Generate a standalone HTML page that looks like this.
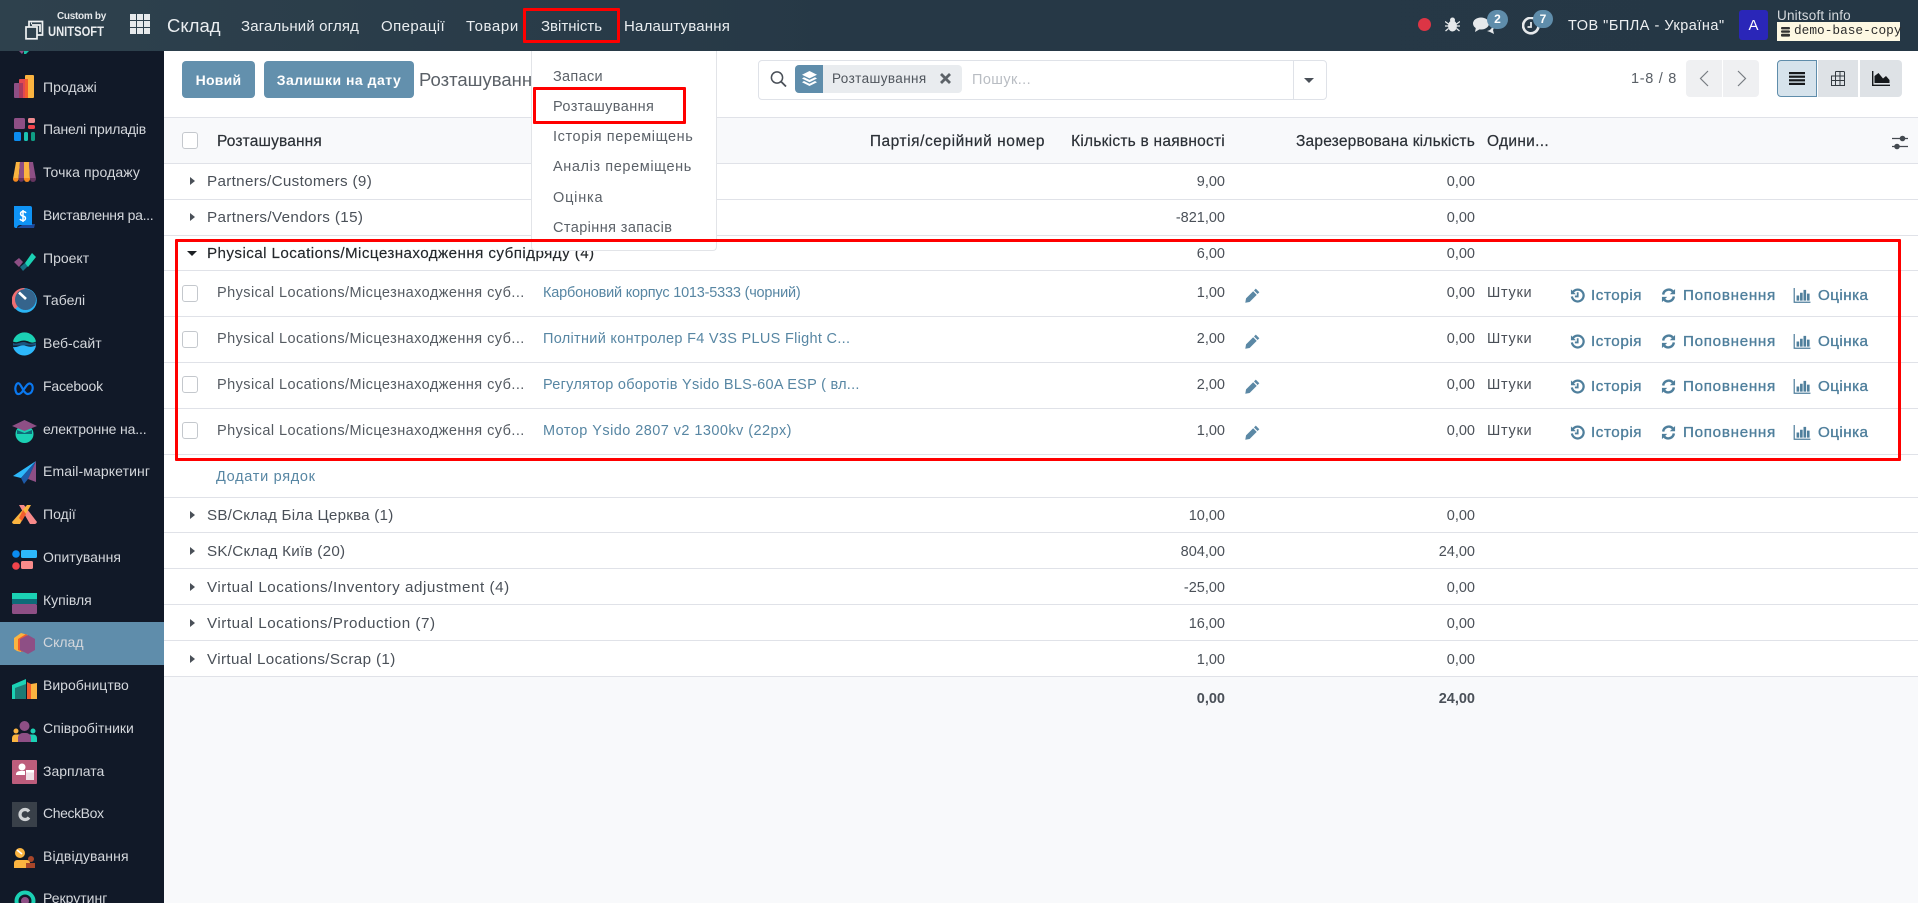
<!DOCTYPE html>
<html lang="uk"><head><meta charset="utf-8"><title>Склад</title>
<style>
html,body{margin:0;padding:0;width:1918px;height:903px;overflow:hidden;background:#fff}
body{position:relative;font-family:"Liberation Sans","Noto Sans CJK SC",sans-serif;font-size:14.5px;color:#4a5058}
.a,.t,.l,svg{position:absolute}
.t{line-height:20px;white-space:nowrap}
.l{left:164px;right:0;height:1px;background:#e0e2e8}
.nav{color:#e9edf0;font-size:15px}
.side{left:43px;color:#d4d7dc;font-size:14px}
.g{left:207px;color:#4a5058;font-size:15.2px}
.h{color:#2b3036;-webkit-text-stroke:.2px #2b3036;font-size:15.5px}
.m{left:553px;color:#5b6168}
.n{left:217px;color:#555b62;letter-spacing:.44px}
.p{left:543px;color:#5786a3}
.r1{right:693px}.r2{right:443px}
.u{left:1487px;letter-spacing:.7px}
.act{color:#4f7f9c;font-size:15.2px;-webkit-text-stroke:.35px #4f7f9c}
.a1{left:1591px;letter-spacing:.57px}.a2{left:1683px;letter-spacing:.7px}.a3{left:1818px;letter-spacing:.45px}
.cb{left:182px;width:14px;height:15px;border:1px solid #c4c8cd;border-radius:3px;background:#fff}
.car{left:190px;width:0;height:0;border-top:4.5px solid transparent;border-bottom:4.5px solid transparent;border-left:5px solid #4a5058}
.red{border:3.5px solid #f00;box-sizing:border-box;border-radius:1px}
</style></head><body>
<svg width="0" height="0" style="position:absolute"><defs>
<symbol id="hist" viewBox="0 0 16 16"><path d="M3 4.500A6.300 6.300 0 1 1 2 9" fill="none" stroke="#4f7f9c" stroke-width="2.400"/><path d="M1 1.500L6.200 6.600H1z" fill="#4f7f9c"/><path d="M8.200 4.500V9H5.200" fill="none" stroke="#4f7f9c" stroke-width="1.900"/></symbol>
<symbol id="ref" viewBox="0 0 16 16"><path d="M2.300 7A6 6 0 0 1 12.600 3.600" fill="none" stroke="#4f7f9c" stroke-width="2.600"/><path d="M15 1v5.600H9.400z" fill="#4f7f9c"/><path d="M13.700 9A6 6 0 0 1 3.400 12.400" fill="none" stroke="#4f7f9c" stroke-width="2.600"/><path d="M1 15V9.400h5.600z" fill="#4f7f9c"/></symbol>
<symbol id="bar" viewBox="0 0 18 16"><path d="M.7 0v15.200H18" fill="none" stroke="#4f7f9c" stroke-width="1.300"/><path d="M3.200 8h2.800v5.500H3.200zM6.900 5h2.800v8.500H6.900zM10.600 2h2.800v11.500h-2.800zM14.300 6h2.800v7.500h-2.800z" fill="#4f7f9c"/></symbol>
<symbol id="pen" viewBox="0 0 16 16"><path d="M11.500.7l3.800 3.800-1.900 1.900-3.800-3.800zM8.700 3.500l3.800 3.800-7.600 7.600L.3 15.700l.8-4.600z" fill="#5b88a5"/></symbol>
</defs></svg>

<!-- navbar -->
<div class="a" style="left:0;top:0;width:1918px;height:51px;background:linear-gradient(90deg,#2e414d,#263846 45%,#253745)"></div>
<svg style="left:25px;top:20px" width="19" height="20" viewBox="0 0 19 20" fill="none" stroke="#f0f2f3" stroke-width="1.700"><path d="M4 7V1.500h13.500V15h-5"/><path d="M7 3.500h-1M7 5h8v7"/><rect x="1" y="7" width="11" height="11.800"/></svg>
<div class="t" style="left:57px;top:7px;font-size:10px;font-weight:700;color:#e5e8ea;letter-spacing:-.3px">Custom by</div>
<div class="t" style="left:48px;top:21px;font-size:14px;font-weight:700;color:#e9ecee;transform:scaleX(.8);transform-origin:0 50%">UNITSOFT</div>
<svg style="left:130px;top:14px" width="20" height="20" viewBox="0 0 20 20" fill="#e6e9eb"><rect width="6" height="6"/><rect x="7" width="6" height="6"/><rect x="14" width="6" height="6"/><rect y="7" width="6" height="6"/><rect x="7" y="7" width="6" height="6"/><rect x="14" y="7" width="6" height="6"/><rect y="14" width="6" height="6"/><rect x="7" y="14" width="6" height="6"/><rect x="14" y="14" width="6" height="6"/></svg>
<div class="t" style="left:167px;top:16px;font-size:18.500px;color:#e9edf0">Склад</div>
<div class="t nav" style="left:241px;top:17px;letter-spacing:.15px">Загальний огляд</div>
<div class="t nav" style="left:381px;top:17px;letter-spacing:.4px">Операції</div>
<div class="t nav" style="left:466px;top:17px;letter-spacing:.6px">Товари</div>
<div class="t nav" style="left:541px;top:17px">Звітність</div>
<div class="t nav" style="left:624px;top:17px;letter-spacing:.2px">Налаштування</div>

<svg style="left:1418px;top:18px" width="13" height="13"><circle cx="6.500" cy="6.500" r="6.500" fill="#dc3545"/></svg>
<svg style="left:1445px;top:17px" width="15" height="15" viewBox="0 0 15 15" fill="#e6e9eb"><ellipse cx="7.500" cy="9" rx="4.500" ry="5.500"/><circle cx="7.500" cy="3" r="2.500"/><path d="M0 4.500l3.500 2.500M15 4.500l-3.500 2.500M0 9h3M12 9h3M.5 14l3-2.500M14.500 14l-3-2.500" stroke="#e6e9eb" stroke-width="1.300"/></svg>
<svg style="left:1473px;top:16px" width="22" height="19" viewBox="0 0 22 19" fill="#e6e9eb"><ellipse cx="8" cy="7.500" rx="8" ry="6"/><path d="M3 11l-1 5 5-3z"/><path d="M14 15a7 5 0 0 0 5-6l2 3-1 2 1 4-4-2z"/></svg>
<div class="a" style="left:1487px;top:10px;width:21px;height:19px;border-radius:10px;background:#5f8dab"></div>
<div class="t" style="left:1487px;top:9px;width:21px;text-align:center;color:#fff;font-size:12px;font-weight:700">2</div>
<svg style="left:1522px;top:17px" width="18" height="18" viewBox="0 0 18 18" fill="none" stroke="#e6e9eb" stroke-width="2.600"><path d="M15 4A7.700 7.700 0 1 0 16.500 9"/><path d="M9 5v5H5.500" stroke-width="1.800"/></svg>
<div class="a" style="left:1533px;top:10px;width:20px;height:18px;border-radius:10px;background:#5f8dab"></div>
<div class="t" style="left:1533px;top:9px;width:20px;text-align:center;color:#fff;font-size:12px;font-weight:700">7</div>
<div class="t" style="left:1568px;top:16px;color:#eef0f2;font-size:14.500px;letter-spacing:.5px">ТОВ "БПЛА - Україна"</div>
<div class="a" style="left:1739px;top:10px;width:29px;height:30px;border-radius:3px;background:#2a26b8"></div>
<div class="t" style="left:1739px;top:16px;width:29px;text-align:center;color:#fff;font-size:15px">А</div>
<div class="t" style="left:1777px;top:6px;color:#d6dade;font-size:13.500px;letter-spacing:.2px">Unitsoft info</div>
<div class="a" style="left:1777px;top:22px;width:123px;height:19px;background:#fdf8e3"></div>
<svg style="left:1781px;top:27px" width="9" height="10" viewBox="0 0 9 10" fill="#333"><rect width="9" height="2.400" rx="1"/><rect y="3.400" width="9" height="2.400" rx="1"/><rect y="6.800" width="9" height="2.800" rx="1"/></svg>
<div class="t" style="left:1794px;top:21px;font-family:'Liberation Mono',monospace;font-size:12.800px;color:#2c2c2c">demo-base-copy</div>

<!-- sidebar -->
<div class="a" style="left:0;top:51px;width:164px;height:852px;background:#111928"></div>
<div class="a" style="left:0;top:622px;width:164px;height:43px;background:#5f8dab"></div>
<svg style="left:18px;top:51px" width="12" height="4"><path d="M1 0h5l-2 3z" fill="#8e4f85"/><path d="M6 0h5l-3 3-2 0z" fill="#1bbfa6"/></svg>

<svg style="left:12px;top:74px" width="25" height="25" viewBox="0 0 25 25"><rect x="2" y="9" width="9" height="15" rx="1" fill="#8e4f85"/><rect x="7" y="5" width="9" height="19" rx="1" fill="#e2484f"/><rect x="13" y="1" width="9" height="23" rx="1" fill="#fbb440"/><rect x="13" y="5" width="3" height="19" fill="#f25d2d"/><rect x="7" y="9" width="4" height="15" fill="#a83a5e"/></svg>
<div class="t side" style="top:77px">Продажі</div>
<svg style="left:12px;top:117px" width="25" height="25" viewBox="0 0 25 25"><rect x="2" y="1" width="11" height="11" rx="1.500" fill="#8e4f85"/><rect x="16" y="1" width="7" height="5" rx="1.500" fill="#f08b8f"/><rect x="16" y="8" width="7" height="4" rx="1.500" fill="#f2444c"/><rect x="2" y="15" width="7" height="9" rx="1.500" fill="#0b8cf0"/><rect x="12" y="15" width="4" height="9" rx="1.500" fill="#1bc4b4"/><rect x="19" y="15" width="4" height="9" rx="1.500" fill="#0f9d84"/></svg>
<div class="t side" style="top:119px;letter-spacing:-.2px">Панелі приладів</div>
<svg style="left:12px;top:159px" width="25" height="25" viewBox="0 0 25 25"><path d="M4 3h4l-1.500 17H1z" fill="#fbb440"/><path d="M8 3h4v17H6.500z" fill="#8e4f85"/><path d="M12 3h5l1 17h-6z" fill="#fbb440"/><path d="M17 3h4l3 17h-6z" fill="#8e4f85"/><path d="M1 19h5.500v1a2.700 2.700 0 0 1-5.500 0z" fill="#f58a1f"/><path d="M6.500 19H12v1a2.700 2.700 0 0 1-5.500 0z" fill="#65345f"/><path d="M12 19h6v1a3 3 0 0 1-6 0z" fill="#f58a1f"/><path d="M18 19h6v1a3 3 0 0 1-6 0z" fill="#65345f"/></svg>
<div class="t side" style="top:162px;letter-spacing:.1px">Точка продажу</div>
<svg style="left:12px;top:205px" width="25" height="25" viewBox="0 0 25 25"><path d="M5 23h17l1-4H12z" fill="#1d4a9c"/><path d="M2 1h16a2 2 0 0 1 2 2v17H8a3 3 0 0 0-3 3H4a2 2 0 0 1-2-2z" fill="#0f93f5"/><path d="M11 6.500C8 6.500 7.500 10.300 11 11s3 4.500 0 4.500c-1.500 0-2.500-.6-3-1.500M14 8c-.5-1-1.500-1.500-3-1.500M11 5v12" fill="none" stroke="#fff" stroke-width="1.500"/></svg>
<div class="t side" style="top:205px;letter-spacing:-.3px">Виставлення ра...</div>
<svg style="left:12px;top:248px" width="25" height="25" viewBox="0 0 25 25"><path d="M2 14l5-4 4 4-4 5z" fill="#8e4f85"/><path d="M8 19l5-4 3 3-5 5z" fill="#166f85"/><path d="M13 15L20 5l4 4-8 10z" fill="#1bd1b4"/></svg>
<div class="t side" style="top:248px">Проект</div>
<svg style="left:12px;top:288px" width="25" height="25" viewBox="0 0 25 25"><circle cx="12.500" cy="12.500" r="12.300" fill="#2bb5f5"/><path d="M12.500 0A12.500 12.500 0 0 0 3 21L12.500 12.500z" fill="#ef6f72"/><circle cx="13.500" cy="11.500" r="10.500" fill="#35648c"/><path d="M7 4.500L14 11" stroke="#fff" stroke-width="2.600"/></svg>
<div class="t side" style="top:290px">Табелі</div>
<svg style="left:12px;top:332px" width="25" height="25" viewBox="0 0 25 25"><path d="M1 9.500A11.800 11.800 0 0 1 24 9.500c-5 3-7-1-12-1s-6 3-11 1z" fill="#1bd1b4"/><path d="M1 11c4 2 7-1.500 11-1s4 3 12 .5v3l-23 0z" fill="#19547f"/><path d="M1 15c5 1 8-3 13-1 4 1 6 1 10-.5A11.800 11.800 0 0 1 1 15z" fill="#2db8fb"/></svg>
<div class="t side" style="top:333px">Веб-сайт</div>
<svg style="left:12px;top:375px" width="25" height="25" viewBox="0 0 25 25" fill="none"><path d="M4 17c-2-5 1-10 3-8.500 3 2 5 11 9 10.500 5-.5 6-8 3-10-3-2.500-6 4-9 8-2 2.500-5 3-6 0z" stroke="#0a78f0" stroke-width="2.200"/></svg>
<div class="t side" style="top:376px;letter-spacing:-.2px">Facebook</div>
<svg style="left:12px;top:419px" width="25" height="25" viewBox="0 0 25 25"><circle cx="12.500" cy="15" r="9" fill="#1bd1b4"/><path d="M5 11l7.500 3 7.500-3v4H5z" fill="#0d6b78"/><path d="M0 7l12.500-6L25 7l-12.500 5z" fill="#8e4f85"/></svg>
<div class="t side" style="top:419px;letter-spacing:-.15px">електронне на...</div>
<svg style="left:12px;top:460px" width="25" height="25" viewBox="0 0 25 25"><path d="M24 1L1 16l8 2z" fill="#2db8fb"/><path d="M24 1L9 18l3 6 4-5z" fill="#1d5aa8"/><path d="M24 1l-8 18 8 3z" fill="#8e4f85"/></svg>
<div class="t side" style="top:461px;letter-spacing:.1px">Email-маркетинг</div>
<svg style="left:12px;top:503px" width="25" height="25" viewBox="0 0 25 25"><path d="M7 2h5l13 17a3 3 0 0 1-2 2h-5z" fill="#f88a8a"/><path d="M19 2h-4L0 19c0 1 1 2 2 2h6z" fill="#fbb440"/><path d="M11 7l3 4-4 7-3-3z" fill="#f25d2d"/></svg>
<div class="t side" style="top:504px">Події</div>
<svg style="left:12px;top:548px" width="25" height="25" viewBox="0 0 25 25"><circle cx="4" cy="6" r="3.800" fill="#0b8cf0"/><circle cx="4" cy="18" r="3.800" fill="#f2444c"/><rect x="9" y="2" width="16" height="8" rx="1.500" fill="#2db8fb"/><rect x="9" y="13" width="12" height="8" rx="1.500" fill="#f88a8a"/></svg>
<div class="t side" style="top:547px">Опитування</div>
<svg style="left:12px;top:591px" width="25" height="25" viewBox="0 0 25 25"><rect y="2" width="25" height="6" fill="#1bd1b4"/><rect y="8" width="25" height="5" fill="#0d6b78"/><rect y="13" width="25" height="10" rx="1.500" fill="#8e4f85"/></svg>
<div class="t side" style="top:590px">Купівля</div>
<svg style="left:14px;top:632px" width="21" height="23" viewBox="0 0 21 23"><path d="M0 6l7-5 7 2-7 5v12l-4-1-3-2z" fill="#fbb440"/><path d="M4 7l8-5 2 2-5 4v12l-5-2z" fill="#f25d2d"/><path d="M6 7l8-4 7 4v11l-7 4-8-4z" fill="#8e4f85"/></svg>
<div class="t side" style="top:632px">Склад</div>
<svg style="left:12px;top:677px" width="25" height="25" viewBox="0 0 25 25"><path d="M0 8l14-6v20H0z" fill="#1bd1b4"/><path d="M3 11l11-4v15H3z" fill="#1d7a74"/><path d="M15 5l4 2v15h-4z" fill="#f25d2d"/><path d="M19 7l6-1v16h-6z" fill="#fbb440"/></svg>
<div class="t side" style="top:675px">Виробництво</div>
<svg style="left:12px;top:719px" width="25" height="25" viewBox="0 0 25 25"><circle cx="4" cy="12" r="2.500" fill="#fbb440"/><circle cx="21" cy="12" r="2.500" fill="#1bd1b4"/><circle cx="12.500" cy="7" r="5" fill="#8e4f85"/><path d="M0 23v-4a3.500 3.500 0 0 1 3.500-3.500H8V23z" fill="#fbb440"/><path d="M25 23v-4a3.500 3.500 0 0 0-3.500-3.500H17V23z" fill="#1bd1b4"/><path d="M6 23v-5a5 5 0 0 1 5-4h3a5 5 0 0 1 5 4v5z" fill="#8e4f85"/></svg>
<div class="t side" style="top:718px">Співробітники</div>
<svg style="left:12px;top:760px" width="25" height="24" viewBox="0 0 25 24"><rect width="25" height="24" rx="1" fill="#bd5d7c"/><circle cx="10" cy="7" r="3.500" fill="#fff"/><path d="M4 15v-1a4 3 0 0 1 4-3h5v4z" fill="#fff"/><rect x="14" y="10" width="8" height="10" fill="#efdfe5"/><rect x="14" y="10" width="8" height="2.500" fill="#fff"/></svg>
<div class="t side" style="top:761px">Зарплата</div>
<svg style="left:12px;top:802px" width="25" height="25" viewBox="0 0 25 25"><rect width="25" height="25" fill="#394049"/><path d="M17 9.500a5 5 0 1 0 0 6" fill="none" stroke="#cfd2d5" stroke-width="3.200"/></svg>
<div class="t side" style="top:803px;letter-spacing:-.4px">CheckBox</div>
<svg style="left:12px;top:846px" width="25" height="25" viewBox="0 0 25 25"><circle cx="8" cy="7" r="5" fill="#fbb440"/><path d="M5 4l5 4" stroke="#fff" stroke-width="1.600"/><circle cx="19" cy="13" r="3" fill="#a8462a"/><path d="M2 22v-5a3 3 0 0 1 3-3h10c2 0 3 2 3 3H14v5z" fill="#fbb440"/><path d="M14 17h9v5h-9z" fill="#a8462a"/></svg>
<div class="t side" style="top:846px;letter-spacing:.1px">Відвідування</div>
<svg style="left:14px;top:890px" width="22" height="22" viewBox="0 0 22 22"><circle cx="11" cy="11" r="8.500" fill="none" stroke="#1bd1b4" stroke-width="4"/><circle cx="11" cy="11" r="4" fill="#8e4f85"/></svg>
<div class="t side" style="top:888px">Рекрутинг</div>

<!-- control panel -->
<div class="a" style="left:182px;top:61px;width:73px;height:37px;border-radius:4px;background:#6390ad"></div>
<div class="t" style="left:182px;top:70px;width:73px;text-align:center;color:#fff;font-weight:700;font-size:14px;letter-spacing:.25px">Новий</div>
<div class="a" style="left:264px;top:61px;width:150px;height:37px;border-radius:4px;background:#6390ad"></div>
<div class="t" style="left:264px;top:70px;width:150px;text-align:center;color:#fff;font-weight:700;font-size:14px;letter-spacing:.5px">Залишки на дату</div>
<div class="t" style="left:419px;top:70px;width:112px;overflow:hidden;font-size:18.500px;color:#5a6067">Розташування</div>

<div class="a" style="left:758px;top:60px;width:567px;height:38px;border:1px solid #dfe2e8;border-radius:4px;background:#fff"></div>
<div class="a" style="left:1293px;top:61px;width:1px;height:38px;background:#dfe2e8"></div>
<svg style="left:770px;top:71px" width="17" height="16" viewBox="0 0 17 16" fill="none" stroke="#4a5058" stroke-width="1.500"><circle cx="7" cy="6.500" r="5.600"/><path d="M11 10.500l5 5" stroke-width="1.800"/></svg>
<div class="a" style="left:795px;top:65px;width:167px;height:28px;border-radius:4px;background:#e9ecef"></div>
<div class="a" style="left:795px;top:65px;width:28px;height:28px;border-radius:4px 0 0 4px;background:#5f8dab"></div>
<svg style="left:802px;top:71px" width="15" height="16" viewBox="0 0 15 16" fill="#fff"><path d="M7.500 0L15 3.700 7.500 7.400 0 3.700z"/><path d="M2 6.200l5.500 2.700L13 6.200l2 1.300-7.500 3.700L0 7.500z"/><path d="M2 10l5.500 2.700L13 10l2 1.300L7.500 15 0 11.300z"/></svg>
<div class="t" style="left:832px;top:69px;font-size:13.500px;color:#4f555c;letter-spacing:.4px">Розташування</div>
<svg style="left:940px;top:73px" width="11" height="11" viewBox="0 0 11 11" stroke="#5c6268" stroke-width="2.800"><path d="M1 1l9 9M10 1l-9 9"/></svg>
<div class="t" style="left:972px;top:70px;font-size:14.500px;color:#b9bdc3;letter-spacing:.4px">Пошук...</div>
<div class="a" style="left:1304px;top:78px;width:0;height:0;border-left:5px solid transparent;border-right:5px solid transparent;border-top:5px solid #4a5058"></div>

<div class="t" style="left:1631px;top:69px;font-size:14.500px;color:#5a6067;letter-spacing:.7px">1-8 / 8</div>
<div class="a" style="left:1686px;top:60px;width:36px;height:37px;border-radius:4px 0 0 4px;background:#eff0f2"></div>
<div class="a" style="left:1723px;top:60px;width:36px;height:37px;border-radius:0 4px 4px 0;background:#eff0f2"></div>
<svg style="left:1699px;top:70px" width="10" height="17" fill="none" stroke="#777c82" stroke-width="1.200"><path d="M9 1L1.500 8.500 9 16"/></svg>
<svg style="left:1737px;top:70px" width="10" height="17" fill="none" stroke="#777c82" stroke-width="1.200"><path d="M1 1l7.500 7.500L1 16"/></svg>
<div class="a" style="left:1777px;top:60px;width:38px;height:35px;border:1px solid #5f8dab;border-radius:4px 0 0 4px;background:#d6e3ec"></div>
<div class="a" style="left:1818px;top:60px;width:40px;height:37px;background:#dee2e6"></div>
<div class="a" style="left:1860px;top:60px;width:42px;height:37px;border-radius:0 4px 4px 0;background:#dee2e6"></div>
<svg style="left:1789px;top:72px" width="16" height="13" fill="#16191c"><rect width="16" height="2.200"/><rect y="3.600" width="16" height="2.200"/><rect y="7.200" width="16" height="2.200"/><rect y="10.800" width="16" height="2.200"/></svg>
<svg style="left:1830px;top:71px" width="16" height="15" fill="none" stroke="#333a40"><path d="M5.500.5h8a1 1 0 0 1 1 1V14.500H1.500V5H14.500M1.500 9.500h13M5.500.5V14.500M10 .5v14M5.500 5"/></svg>
<svg style="left:1872px;top:71px" width="18" height="15" viewBox="0 0 18 15"><path d="M.7 0v14.300H18" fill="none" stroke="#16191c" stroke-width="1.400"/><path d="M2.500 12V5l4-3 4.500 5.500 3-2.500 3.500 4v3z" fill="#16191c"/></svg>

<!-- table bg / lines -->
<div class="a" style="left:164px;top:117px;width:1754px;height:46px;background:#f8f9fb"></div>
<div class="a" style="left:164px;top:677px;width:1754px;height:226px;background:#f8f9fb"></div>
<div class="l" style="top:117px"></div><div class="l" style="top:163px"></div><div class="l" style="top:199px"></div><div class="l" style="top:235px"></div><div class="l" style="top:270px"></div><div class="l" style="top:316px"></div><div class="l" style="top:362px"></div><div class="l" style="top:408px"></div><div class="l" style="top:454px"></div><div class="l" style="top:497px"></div><div class="l" style="top:532px"></div><div class="l" style="top:568px"></div><div class="l" style="top:604px"></div><div class="l" style="top:640px"></div><div class="l" style="top:676px"></div>

<div class="a cb" style="top:132px"></div>
<div class="t h" style="left:217px;top:132px;letter-spacing:.15px">Розташування</div>
<div class="t h" style="right:873px;top:132px;letter-spacing:.55px">Партія/серійний номер</div>
<div class="t h" style="right:693px;top:132px;letter-spacing:.24px">Кількість в наявності</div>
<div class="t h" style="right:443px;top:132px;letter-spacing:.2px">Зарезервована кількість</div>
<div class="t h" style="left:1487px;top:132px;letter-spacing:.3px">Одини...</div>
<svg style="left:1891px;top:135px" width="18" height="15" viewBox="0 0 18 15"><path d="M1 3.500h16M1 11.500h16" stroke="#444a50" stroke-width="1.200"/><circle cx="11.500" cy="3.500" r="2.800" fill="#444a50"/><circle cx="6" cy="11.500" r="2.800" fill="#444a50"/></svg>

<!-- groups -->
<div class="a car" style="top:177px"></div><div class="t g" style="top:172px;letter-spacing:.33px">Partners/Customers (9)</div><div class="t r1" style="top:172px">9,00</div><div class="t r2" style="top:172px">0,00</div>
<div class="a car" style="top:213px"></div><div class="t g" style="top:208px;letter-spacing:.37px">Partners/Vendors (15)</div><div class="t r1" style="top:208px">-821,00</div><div class="t r2" style="top:208px">0,00</div>
<div class="a" style="left:187px;top:251px;width:0;height:0;border-left:5px solid transparent;border-right:5px solid transparent;border-top:5px solid #1c2024"></div><div class="t g" style="top:244px;color:#23272b;-webkit-text-stroke:.15px #23272b;letter-spacing:.42px">Physical Locations/Місцезнаходження субпідряду (4)</div><div class="t r1" style="top:244px">6,00</div><div class="t r2" style="top:244px">0,00</div>

<!-- rows -->
<div class="a cb" style="top:285px"></div><div class="t n" style="top:283px">Physical Locations/Місцезнаходження суб...</div><div class="t p" style="top:283px;letter-spacing:-.2px">Карбоновий корпус 1013-5333 (чорний)</div><div class="t r1" style="top:283px">1,00</div><svg style="left:1245px;top:288px" width="15" height="15"><use href="#pen"/></svg><div class="t r2" style="top:283px">0,00</div><div class="t u" style="top:283px">Штуки</div>
<svg style="left:1570px;top:288px" width="15" height="15"><use href="#hist"/></svg><div class="t act a1" style="top:286px">Історія</div><svg style="left:1661px;top:288px" width="15" height="15"><use href="#ref"/></svg><div class="t act a2" style="top:286px">Поповнення</div><svg style="left:1793px;top:288px" width="18" height="15"><use href="#bar"/></svg><div class="t act a3" style="top:286px">Оцінка</div>

<div class="a cb" style="top:331px"></div><div class="t n" style="top:329px">Physical Locations/Місцезнаходження суб...</div><div class="t p" style="top:329px;letter-spacing:.3px">Політний контролер F4 V3S PLUS Flight C...</div><div class="t r1" style="top:329px">2,00</div><svg style="left:1245px;top:334px" width="15" height="15"><use href="#pen"/></svg><div class="t r2" style="top:329px">0,00</div><div class="t u" style="top:329px">Штуки</div>
<svg style="left:1570px;top:334px" width="15" height="15"><use href="#hist"/></svg><div class="t act a1" style="top:332px">Історія</div><svg style="left:1661px;top:334px" width="15" height="15"><use href="#ref"/></svg><div class="t act a2" style="top:332px">Поповнення</div><svg style="left:1793px;top:334px" width="18" height="15"><use href="#bar"/></svg><div class="t act a3" style="top:332px">Оцінка</div>

<div class="a cb" style="top:376px"></div><div class="t n" style="top:375px">Physical Locations/Місцезнаходження суб...</div><div class="t p" style="top:375px;letter-spacing:.26px">Регулятор оборотів Ysido BLS-60A ESP ( вл...</div><div class="t r1" style="top:375px">2,00</div><svg style="left:1245px;top:379px" width="15" height="15"><use href="#pen"/></svg><div class="t r2" style="top:375px">0,00</div><div class="t u" style="top:375px">Штуки</div>
<svg style="left:1570px;top:379px" width="15" height="15"><use href="#hist"/></svg><div class="t act a1" style="top:377px">Історія</div><svg style="left:1661px;top:379px" width="15" height="15"><use href="#ref"/></svg><div class="t act a2" style="top:377px">Поповнення</div><svg style="left:1793px;top:379px" width="18" height="15"><use href="#bar"/></svg><div class="t act a3" style="top:377px">Оцінка</div>

<div class="a cb" style="top:422px"></div><div class="t n" style="top:421px">Physical Locations/Місцезнаходження суб...</div><div class="t p" style="top:421px;letter-spacing:.44px">Мотор Ysido 2807 v2 1300kv (22px)</div><div class="t r1" style="top:421px">1,00</div><svg style="left:1245px;top:425px" width="15" height="15"><use href="#pen"/></svg><div class="t r2" style="top:421px">0,00</div><div class="t u" style="top:421px">Штуки</div>
<svg style="left:1570px;top:425px" width="15" height="15"><use href="#hist"/></svg><div class="t act a1" style="top:423px">Історія</div><svg style="left:1661px;top:425px" width="15" height="15"><use href="#ref"/></svg><div class="t act a2" style="top:423px">Поповнення</div><svg style="left:1793px;top:425px" width="18" height="15"><use href="#bar"/></svg><div class="t act a3" style="top:423px">Оцінка</div>

<div class="t" style="left:216px;top:467px;color:#5786a3;letter-spacing:.7px">Додати рядок</div>

<div class="a car" style="top:511px"></div><div class="t g" style="top:506px;letter-spacing:.21px">SB/Склад Біла Церква (1)</div><div class="t r1" style="top:506px">10,00</div><div class="t r2" style="top:506px">0,00</div>
<div class="a car" style="top:547px"></div><div class="t g" style="top:542px;letter-spacing:.27px">SK/Склад Київ (20)</div><div class="t r1" style="top:542px">804,00</div><div class="t r2" style="top:542px">24,00</div>
<div class="a car" style="top:583px"></div><div class="t g" style="top:578px;letter-spacing:.54px">Virtual Locations/Inventory adjustment (4)</div><div class="t r1" style="top:578px">-25,00</div><div class="t r2" style="top:578px">0,00</div>
<div class="a car" style="top:619px"></div><div class="t g" style="top:614px;letter-spacing:.53px">Virtual Locations/Production (7)</div><div class="t r1" style="top:614px">16,00</div><div class="t r2" style="top:614px">0,00</div>
<div class="a car" style="top:655px"></div><div class="t g" style="top:650px;letter-spacing:.37px">Virtual Locations/Scrap (1)</div><div class="t r1" style="top:650px">1,00</div><div class="t r2" style="top:650px">0,00</div>
<div class="t r1" style="top:689px;font-weight:700">0,00</div><div class="t r2" style="top:689px;font-weight:700">24,00</div>

<!-- dropdown -->
<div class="a" style="left:531px;top:51px;width:184px;height:199px;background:#fff;border:1px solid #e2e4e8;border-top:none;border-radius:0 0 4px 4px"></div>
<div class="t m" style="top:67px;letter-spacing:.3px">Запаси</div>
<div class="t m" style="top:97px;letter-spacing:.4px">Розташування</div>
<div class="t m" style="top:127px;letter-spacing:.6px">Історія переміщень</div>
<div class="t m" style="top:157px;letter-spacing:.6px">Аналіз переміщень</div>
<div class="t m" style="top:188px;letter-spacing:.8px">Оцінка</div>
<div class="t m" style="top:218px;letter-spacing:.4px">Старіння запасів</div>

<!-- red highlights -->
<div class="a red" style="left:523px;top:8px;width:97px;height:35px"></div>
<div class="a red" style="left:533px;top:87px;width:153px;height:37px"></div>
<div class="a red" style="left:175px;top:239px;width:1726px;height:222px"></div>
</body></html>
